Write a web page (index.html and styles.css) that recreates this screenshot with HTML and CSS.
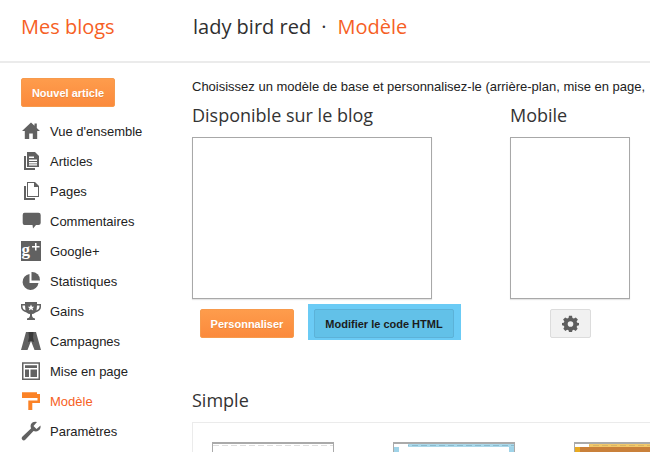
FILE: index.html
```html
<!DOCTYPE html>
<html lang="fr">
<head>
<meta charset="utf-8">
<title>Modèle</title>
<link rel="stylesheet" href="styles.css">
</head>
<body>
<header class="topbar">
  <div class="brand">Mes blogs</div>
  <div class="crumb"><span>lady bird red</span><span class="dot">·</span><span class="crumb-on">Modèle</span></div>
</header>
<div class="layout">
  <nav class="side">
    <button class="btn-orange new">Nouvel article</button>
    <ul class="menu">
      <li><svg class="ico" viewBox="0 0 20 20"><path d="M10 1.500 1 10H3.800V18H8.200V12.500H11.800V18H16.200V10H19L15.800 7V2.500H13.500V4.800Z"/></svg>Vue d'ensemble</li>
      <li><svg class="ico" viewBox="0 0 20 20"><path d="M6 1H14L18 5V16H6ZM8 5.500V7H13V5.500ZM8 8.500V10H16V8.500ZM8 11V12.500H16V11ZM8 13.200V14.500H16V13.200ZM3 5H5V17H14V19H3Z" fill-rule="evenodd"/></svg>Articles</li>
      <li><svg class="ico" viewBox="0 0 20 20"><path d="M6 1H14L18 5V16H6ZM7 2V15H17V6H13V2Z" fill-rule="evenodd"/><path d="M3 5H5V17H14V19H3Z"/></svg>Pages</li>
      <li><svg class="ico" viewBox="0 0 20 20"><path d="M3.500 1.700H17.500Q19.700 1.700 19.700 3.900V12Q19.700 14 17.500 14H15L12 17.500 11.500 14H3.500Q1.700 14 1.700 12V3.900Q1.700 1.700 3.500 1.700Z"/></svg>Commentaires</li>
      <li><svg class="ico" viewBox="0 0 20 20"><rect width="20" height="20"/><text x="0.500" y="14" class="gplus">g</text><path fill="#fff" d="M14 2H15.500V5H18.500V6.500H15.500V9.500H14V6.500H11V5H14Z"/></svg>Google+</li>
      <li><svg class="ico" viewBox="0 0 20 20"><path d="M8.500 3A8 8 0 1 0 17.500 12H8.500Z"/><path d="M10.500 1A8 8 0 0 1 19 9.500H10.500Z"/></svg>Statistiques</li>
      <li><svg class="ico" viewBox="0 0 20 20"><path fill-rule="evenodd" d="M4 1H16V3H20V6Q20 9.500 14.500 11.500Q12.500 13 11 13V15Q11.500 17 14 17.500V19H6V17.500Q8.500 17 9 15V13Q7.500 13 5.500 11.500Q0 9.500 0 6V3H4ZM1.500 4.500V6Q1.500 8 4.500 9.500L4 4.500ZM18.500 4.500H16L15.500 9.500Q18.500 8 18.500 6Z"/><path fill="#fff" d="M10 3.500 11 5.800H13.200L11.500 7.300 12.200 9.500 10 8.200 7.800 9.500 8.500 7.300 6.800 5.800H9Z"/></svg>Gains</li>
      <li><svg class="ico" viewBox="0 0 20 20"><path d="M5 1H15L20 19H13.500L10 10 6.500 19H0Z"/><path fill="#3a3a3a" d="M7.500 1H12.500L12 6.500 13 11 10 10 7 11 8 6.500Z"/></svg>Campagnes</li>
      <li><svg class="ico" viewBox="0 0 20 20"><path fill-rule="evenodd" d="M1 1.300H19V19H1ZM2.500 2.800V17.500H17.500V2.800ZM4 4.300H16V7H4ZM4 8.500H8V16H4ZM9.500 8.500H16V16H9.500Z"/></svg>Mise en page</li>
      <li class="on"><svg class="ico" viewBox="0 0 20 20"><path d="M1 1.300H16V3H19V12H11.300V19H7.300V9.500H16.500V7H1Z"/></svg>Modèle</li>
      <li><svg class="ico" viewBox="0 0 20 20"><path d="M19.500 4.500 15.500 8 12.500 5 16 1Q12 0 10 3 9 5 10 7.500L1 16Q0 17.500 1.500 19 3 20 4.500 18.500L12.500 10Q15.500 11 17.500 9.500 20 8 19.500 4.500Z"/></svg>Paramètres</li>
    </ul>
  </nav>
  <main class="content">
    <p class="intro">Choisissez un modèle de base et personnalisez-le (arrière-plan, mise en page,</p>
    <div class="current">
      <section class="col-blog">
        <h2>Disponible sur le blog</h2>
        <div class="preview wide"></div>
        <div class="actions">
          <button class="btn-orange custom">Personnaliser</button>
          <div class="highlight"><button class="btn-blue">Modifier le code HTML</button></div>
        </div>
      </section>
      <section class="col-mobile">
        <h2>Mobile</h2>
        <div class="preview tall"></div>
        <button class="btn-gear"><svg class="gear" viewBox="0 0 20 20"><path fill-rule="evenodd" d="M8.200 1H11.800L12.300 3.500 14 4.200 16.200 2.800 18.700 5.300 17.200 7.500 17.900 9 20 9.500V12L17.900 12.500 17.200 14 18.400 16.300 16 18.700 14 17.300 12.300 18 11.800 20H8.200L7.700 18 6 17.300 4 18.700 1.600 16.300 2.800 14 2.100 12.500 0 12V9.500L2.100 9 2.800 7.500 1.300 5.300 3.800 2.800 6 4.200 7.700 3.500ZM10 7.300A3.300 3.300 0 1 0 10 13.900 3.300 3.300 0 1 0 10 7.300Z"/></svg></button>
      </section>
    </div>
    <h2 class="simple">Simple</h2>
    <div class="gallery">
      <div class="thumb t1"><div class="thumb-bar"></div><div class="thumb-body"></div></div>
      <div class="thumb t2"><div class="thumb-bar"></div><div class="thumb-body"></div></div>
      <div class="thumb t3"><div class="thumb-bar"></div><div class="thumb-body"></div></div>
    </div>
  </main>
</div>
</body>
</html>
```
FILE: styles.css
```css
html, body { margin: 0; padding: 0; }
body {
  width: 650px;
  height: 452px;
  overflow: hidden;
  background: #fff;
  font-family: "Liberation Sans", Arial, sans-serif;
  color: #222;
}
.topbar {
  padding-bottom: 8px;
  height: 53px;
  border-bottom: 2px solid #ebebeb;
  display: flex;
  align-items: center;
  font-family: "Open Sans", sans-serif;
  font-size: 20px;
  color: #2f2f2f;
}
.brand { width: 193px; padding-left: 21px; box-sizing: border-box; color: #f65f25; }
.crumb { display: flex; }
.dot { margin: 0 11px 0 10px; }
.crumb-on { color: #f65f25; }
.layout { display: flex; }
.side { width: 192px; flex: none; padding: 15px 0 0 21px; box-sizing: border-box; }
button { font-family: "Liberation Sans", Arial, sans-serif; font-weight: bold; font-size: 11px; padding: 0; }
.btn-orange {
  display: block;
  height: 29px;
  border: 1px solid #f79a4c;
  border-radius: 2px;
  background: linear-gradient(#fe9c4c, #fb8a3c);
  color: #fff;
  text-shadow: 0 1px 0 rgba(0,0,0,.1);
}
.new { width: 94px; }
.menu { list-style: none; margin: 9px 0 0; padding: 0; font-size: 13px; color: #222; }
.menu li { height: 30px; display: flex; align-items: center; }
.ico { width: 20px; height: 20px; flex: none; margin-right: 9px; fill: #616161; }
.gplus { fill: #fff; font: bold 17px "Liberation Serif", serif; }
.on { color: #f65f25; }
.on .ico { fill: #fb8226; }
.content { flex: 1; min-width: 0; }
.intro { margin: 16px 0 0; font-size: 13px; line-height: 16px; white-space: nowrap; color: #222; }
h2 { margin: 0; font: normal 18px/24px "Open Sans", sans-serif; color: #333; }
.current { display: flex; margin-top: 8px; }
.col-blog { width: 318px; flex: none; }
.preview { border: 1px solid #a8a8a8; background: #fff; box-sizing: border-box; height: 162px; margin-top: 10px; box-shadow: 0 1px 1px rgba(0,0,0,.1); }
.wide { width: 240px; }
.tall { width: 120px; }
.actions { display: flex; align-items: flex-start; margin: 5px 0 0 8px; }
.custom { width: 94px; margin-top: 5px; }
.highlight { margin-left: 14px; background: #6bcbf5; padding: 5px 7px 2px 6px; display: flex; }
.btn-blue {
  width: 140px;
  height: 29px;
  border: 1px solid #5cb2d8;
  border-radius: 2px;
  background: #62c1e8;
  color: #1c1c1c;
}
.btn-gear {
  display: flex;
  align-items: center;
  justify-content: center;
  width: 41px;
  height: 29px;
  margin: 10px 0 0 40px;
  background: #f1f1f1;
  border: 1px solid #dcdcdc;
  border-radius: 2px;
}
.gear { width: 17px; height: 17px; fill: #5e5e5e; }
.simple { margin-top: 48px; }
.gallery {
  display: flex;
  gap: 59px;
  margin-top: 10px;
  height: 30px;
  padding: 19px 0 0 19px;
  box-sizing: border-box;
  border: 1px solid #ebebeb;
  border-width: 1px 0 0 1px;
  overflow: hidden;
}
.thumb { width: 122px; flex: none; height: 10px; border: 1px solid #aaa; border-top-width: 2px; border-bottom: 0; box-sizing: border-box; }
.thumb-bar { height: 3px; }
.t1 .thumb-bar { background: repeating-linear-gradient(90deg, #ddd 0 6px, #fff 6px 9px) 0 1px / 100% 1px no-repeat #fff; }
.t2 { background: #9fd3e8; }
.t2 .thumb-bar { background: linear-gradient(#fff, #fff) 0 0 / 14px 100% no-repeat, repeating-linear-gradient(90deg, #8cb9cc 0 6px, #a9d8ea 6px 9px) 0 1px / 100% 1px no-repeat #a9d8ea; }
.t3 { background: #e9aa22; }
.t3 .thumb-bar { background: linear-gradient(#fff, #fff) 0 0 / 14px 100% no-repeat, repeating-linear-gradient(90deg, #d8b467 0 6px, #f1c869 6px 9px) 0 1px / 100% 1px no-repeat #f1c869; }
.thumb-body { height: 5px; margin: 0 5px; }
.t1 .thumb-body { background: #fff; }
.t2 .thumb-body { background: #fff; }
.t3 .thumb-body { background: #c9803a; }
```
